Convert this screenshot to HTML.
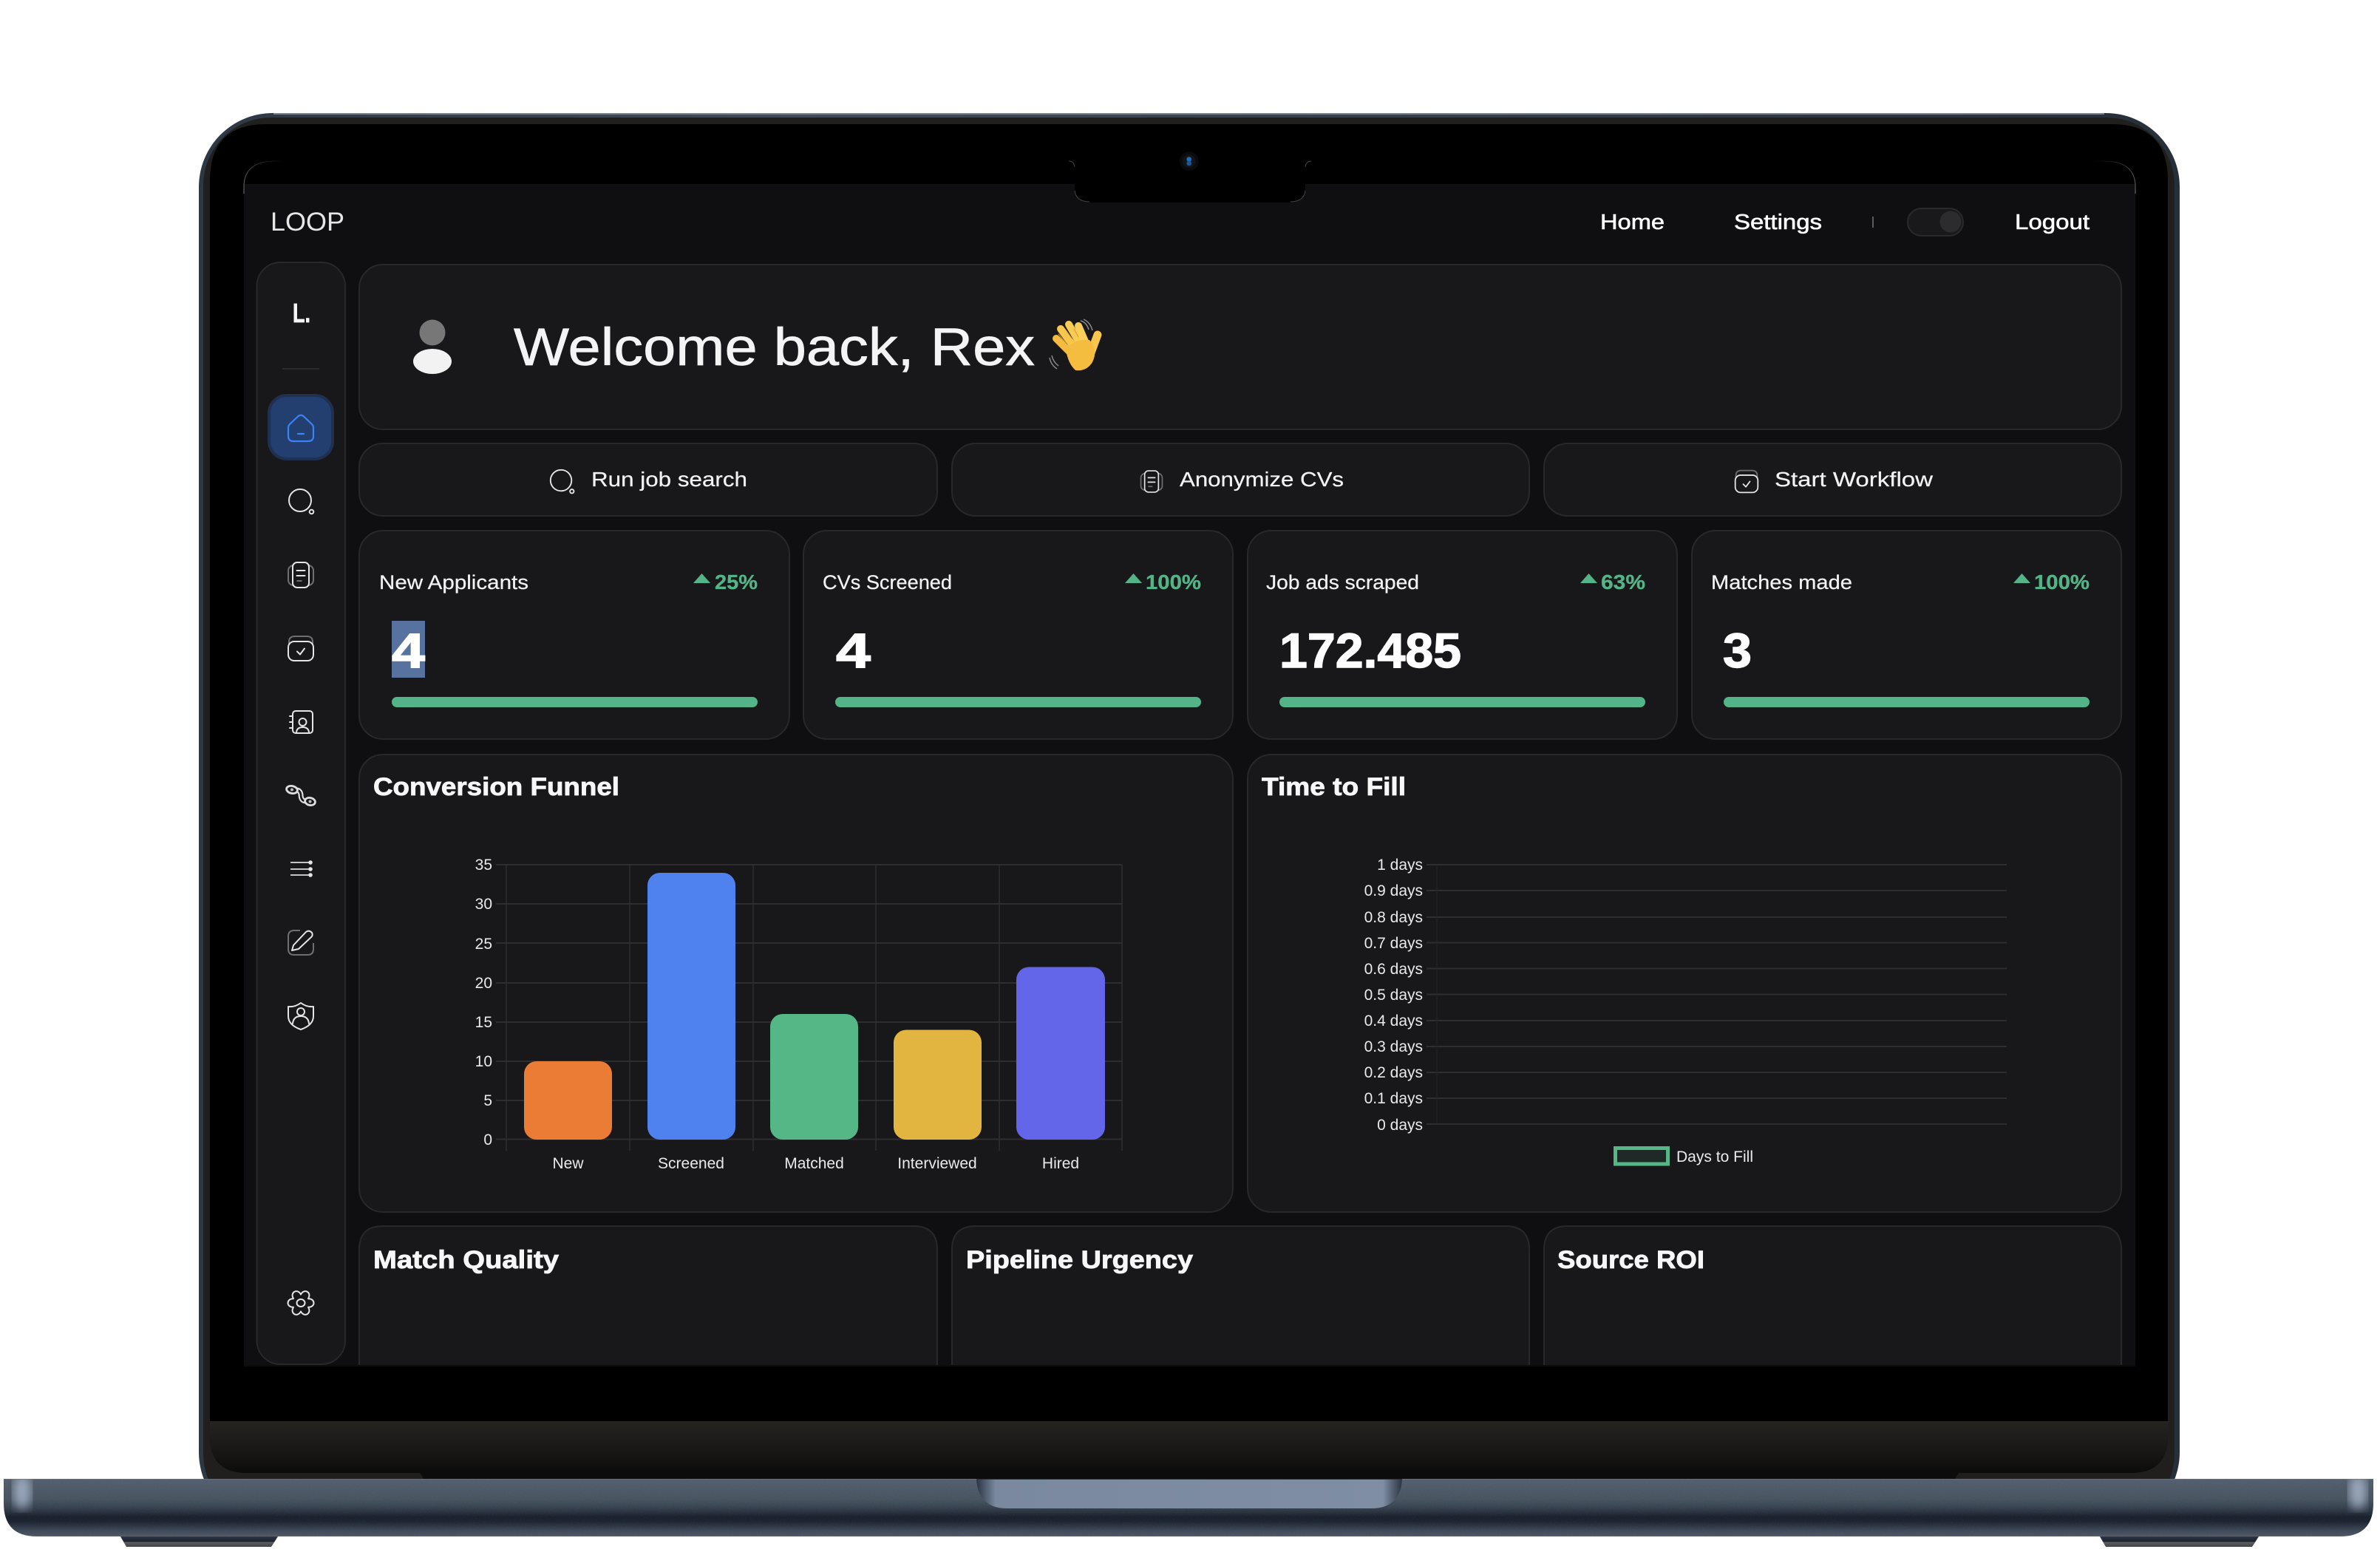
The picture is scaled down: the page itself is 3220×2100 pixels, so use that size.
<!DOCTYPE html>
<html><head><meta charset="utf-8"><title>LOOP Dashboard</title>
<style>
html,body{margin:0;padding:0;background:#fff}
svg{display:block}
text{font-family:"Liberation Sans",sans-serif}
.t{fill:#f2f2f2;font-size:28px;stroke:#f2f2f2;stroke-width:.25}
.m{stroke:#fff;stroke-width:.6;fill:#fff;font-size:29px}
.b{fill:#f7f7f7;font-size:34px;font-weight:700;stroke:#f7f7f7;stroke-width:.8}
.p{fill:#53b587;font-size:28px;font-weight:700;stroke:#53b587;stroke-width:.3}
.n{fill:#fff;font-size:66px;font-weight:700;stroke:#fff;stroke-width:1.4}
.c{fill:#eaeaea;font-size:21px}
.card{fill:#18181a;stroke:#28282a;stroke-width:2}
.ic{fill:none;stroke:#e4e4e4;stroke-width:2;stroke-linecap:round;stroke-linejoin:round}
.dim{fill:none;stroke:#6f6f72;stroke-width:2}
.g{stroke:#2e2e30;stroke-width:2}
</style></head>
<body>
<svg xmlns="http://www.w3.org/2000/svg" width="3220" height="2100" viewBox="0 0 3220 2100">
<defs>
<linearGradient id="chin" x1="0" y1="0" x2="0" y2="1"><stop offset="0" stop-color="#262421"/><stop offset=".5" stop-color="#1a1917"/><stop offset="1" stop-color="#0c0c0c"/></linearGradient>
<linearGradient id="base" x1="0" y1="0" x2="0" y2="1">
<stop offset="0" stop-color="#535f6f"/><stop offset=".36" stop-color="#47535f"/><stop offset=".5" stop-color="#36414f"/><stop offset=".66" stop-color="#19202c"/><stop offset=".74" stop-color="#1b2330"/><stop offset=".9" stop-color="#3d4858"/><stop offset=".98" stop-color="#4a5362"/><stop offset="1" stop-color="#62666f"/>
</linearGradient>
<linearGradient id="notch" x1="0" y1="0" x2="1" y2="0">
<stop offset="0" stop-color="#2b3444"/><stop offset=".045" stop-color="#7a899e"/><stop offset=".955" stop-color="#7f8ea3"/><stop offset="1" stop-color="#2b3444"/>
</linearGradient>
<linearGradient id="foot" x1="0" y1="0" x2="0" y2="1"><stop offset="0" stop-color="#2c3646"/><stop offset=".5" stop-color="#1b2230"/><stop offset=".55" stop-color="#5e5e5e"/><stop offset="1" stop-color="#444"/></linearGradient>
<linearGradient id="edge" x1="0" y1="0" x2="1" y2="0"><stop offset="0" stop-color="#2e3744"/><stop offset=".3" stop-color="#414b59"/><stop offset="1" stop-color="#272f3b"/></linearGradient>
<linearGradient id="fadeL" x1="0" y1="1" x2="1" y2="0"><stop offset="0" stop-color="#777"/><stop offset="1" stop-color="#777" stop-opacity="0"/></linearGradient>
<linearGradient id="fadeR" x1="1" y1="1" x2="0" y2="0"><stop offset="0" stop-color="#777"/><stop offset="1" stop-color="#777" stop-opacity="0"/></linearGradient>
<filter id="noise" x="0" y="0" width="100%" height="100%"><feTurbulence type="fractalNoise" baseFrequency=".7" numOctaves="2" seed="4"/><feColorMatrix values="0 0 0 0 1  0 0 0 0 1  0 0 0 0 1  0 0 0 .35 -.1"/></filter>
<filter id="bl"><feGaussianBlur stdDeviation="7"/></filter>
<clipPath id="baseclip"><path d="M5,2001H3211V2034Q3211,2079 3166,2079H50Q5,2079 5,2034Z"/></clipPath>

<g id="i-search" class="ic"><circle cx="-1" cy="-1" r="15"/><circle cx="14.500" cy="14.500" r="2.800"/></g>
<g id="i-doc"><rect class="dim" x="-17" y="-13" width="34" height="27" rx="7"/><rect class="ic" style="fill:#18181a" x="-11" y="-17" width="22" height="34" rx="6"/><path class="ic" d="M-5.500,-6H5.500M-5.500,1H5.500"/><path class="dim" d="M-5.500,8H1.500"/></g>
<g id="i-check"><path class="dim" d="M-16,-5V-9Q-16,-16.500 -8,-16.500H8Q16,-16.500 16,-9V-5"/><rect class="ic" style="fill:#18181a" x="-17" y="-9.500" width="34" height="26" rx="8"/><path class="ic" d="M-5,4L-1,8L5,0"/></g>
</defs>

<rect width="3220" height="2100" fill="#fff"/>

<!-- lid -->
<rect x="269" y="153" width="2680" height="1912" rx="100" fill="url(#edge)"/>
<path d="M370,154H2847" stroke="#79838f" stroke-width="2" fill="none"/>
<rect x="275" y="159" width="2667" height="1900" rx="92" fill="#211f1d"/>
<path d="M360,168H2857Q2933,168 2933,244V1943Q2933,1993 2883,1993H334Q284,1993 284,1943V244Q284,168 360,168Z" fill="#000"/>
<path d="M284,1923H2933V1943Q2933,1993 2883,1993H334Q284,1993 284,1943Z" fill="url(#chin)"/>
<path d="M568,1993L573,2001H2645L2650,1993Z" fill="#0c0c0c"/>

<!-- screen -->
<rect x="330" y="249" width="2559" height="1600" fill="#0f0f11"/>
<path d="M330,262V250Q332,218 372,218H386" fill="none" stroke="url(#fadeL)" stroke-width="1"/>
<path d="M2889,262V250Q2887,218 2847,218H2833" fill="none" stroke="url(#fadeR)" stroke-width="1"/>
<path d="M1454,218H1766V254Q1766,274 1746,274H1474Q1454,274 1454,254Z" fill="#000"/>
<path d="M1454,258Q1456,273 1474,273M1766,258Q1764,273 1746,273M1446,218Q1453,218 1454,226M1774,218Q1767,218 1766,226" fill="none" stroke="#444" stroke-width="1"/>
<circle cx="1608.700" cy="218" r="13" fill="#0a0a0c"/><circle cx="1608.700" cy="218" r="9" fill="#111418"/>
<circle cx="1608.700" cy="215.500" r="3.300" fill="#1d6fb8"/><circle cx="1608.700" cy="221" r="3.300" fill="#17599a"/>

<!-- top nav -->
<text x="366" y="312" style="font-size:35px;fill:#e6e6e6" textLength="100" lengthAdjust="spacingAndGlyphs">LOOP</text>
<text x="2165" y="310" class="m" textLength="87" lengthAdjust="spacingAndGlyphs">Home</text>
<text x="2346" y="310" class="m" textLength="119" lengthAdjust="spacingAndGlyphs">Settings</text>
<path d="M2534,293V308" stroke="#5c5c5e" stroke-width="2"/>
<rect x="2581" y="282" width="75" height="37" rx="18.500" fill="#19191b" stroke="#2a2a2c" stroke-width="2"/>
<circle cx="2639" cy="300" r="14.500" fill="#2c2c2e"/>
<text x="2726" y="310" class="m" textLength="101" lengthAdjust="spacingAndGlyphs">Logout</text>

<!-- sidebar -->
<rect class="card" x="347.500" y="355" width="119.500" height="1491" rx="32"/>
<text x="396" y="436" style="font-size:36px;font-weight:700;stroke:#f5f5f5;stroke-width:.8" fill="#f5f5f5" textLength="24" lengthAdjust="spacingAndGlyphs">L.</text>
<path d="M382,499H432" stroke="#2b2b2d" stroke-width="2"/>
<rect x="364" y="535" width="86" height="86" rx="24" fill="#233f70" stroke="#1f3050" stroke-width="4"/>
<g transform="translate(407,579)" fill="none" stroke="#3b82f6" stroke-width="2.200" stroke-linejoin="round" stroke-linecap="round"><path d="M-15,-5L-4,-15.500Q0,-19 4,-15.500L15,-5Q17,-3 17,0V11Q17,18 10,18H-10Q-17,18 -17,11V0Q-17,-3 -15,-5Z"/><path d="M-4,8H4"/></g>
<use href="#i-search" transform="translate(407,678)"/>
<use href="#i-doc" transform="translate(407,778)"/>
<use href="#i-check" transform="translate(407,877.500)"/>
<g class="ic" transform="translate(408,977)"><rect x="-12" y="-15" width="27" height="30" rx="4"/><path d="M-16,-8H-12M-16,0H-12M-16,8H-12"/><circle cx="1.500" cy="0" r="5"/><path d="M-7,15Q-7,7 1.500,7Q10,7 10,15"/></g>
<g transform="translate(407,1077)" fill="none" stroke-linecap="round">
<path d="M-6,-8Q-1,-8 0,-2Q0,7 7,7" stroke="#ddd" stroke-width="7"/>
<path d="M-6,-8Q-1,-8 0,-2Q0,7 7,7" stroke="#18181a" stroke-width="2.600"/>
<ellipse cx="-12" cy="-8.500" rx="7.500" ry="5" stroke="#ddd" stroke-width="2.800" fill="#18181a" transform="rotate(12 -12 -8.500)"/>
<ellipse cx="12.500" cy="7.500" rx="7" ry="5" stroke="#ddd" stroke-width="2.800" fill="#18181a" transform="rotate(12 12.500 7.500)"/>
<circle cx="-12" cy="-8.500" r="2" fill="#bbb"/><circle cx="12.500" cy="7.500" r="2" fill="#bbb"/></g>
<g transform="translate(407,1176)"><path d="M-14,-9H12M-14,0H12M-14,8H12" stroke="#ddd" stroke-width="1.800"/><circle cx="13" cy="-9" r="2.800" fill="#e4e4e4"/><circle cx="13" cy="0" r="2.800" fill="#e4e4e4"/><circle cx="13" cy="8" r="2.800" fill="#e4e4e4"/></g>
<g transform="translate(407,1275)"><path class="dim" d="M-1,-16H-9Q-17,-16 -17,-8V9Q-17,17 -9,17H9Q17,17 17,9V1"/><path class="ic" d="M-12,11L-10,4L7,-14Q11,-17 15,-13Q17,-9 13,-6L-3,9Z"/></g>
<g class="ic" transform="translate(407,1375)"><path d="M0,-18Q-8,-12 -17,-13V0Q-17,12 0,18Q17,12 17,0V-13Q8,-12 0,-18Z"/><circle cx="0" cy="-6" r="5"/><path d="M-11,10Q-10,0 0,0Q10,0 11,10"/></g>
<g class="ic" transform="translate(407,1763)"><path d="M10,-5.750C20,-6 20,6 10,5.750C15.200,14.300 4.800,20.300 0,11.500C-4.800,20.300 -15.200,14.300 -10,5.750C-20,6 -20,-6 -10,-5.750C-15.200,-14.300 -4.800,-20.300 0,-11.500C4.800,-20.300 15.200,-14.300 10,-5.750Z"/><ellipse cx="0" cy="0" rx="5.500" ry="5"/></g>

<!-- welcome -->
<rect class="card" x="486" y="358" width="2384" height="223" rx="32"/>
<circle cx="585" cy="450" r="17.500" fill="#777778"/>
<ellipse cx="585" cy="489" rx="26" ry="17" fill="#f2f2f2"/>
<text x="695" y="494" style="font-size:71px;stroke:#f4f4f4;stroke-width:.7" fill="#f4f4f4" textLength="705" lengthAdjust="spacingAndGlyphs">Welcome back, Rex</text>
<g stroke-linecap="round" fill="none">
<path d="M1447,476L1429,458" stroke="#f4bb40" stroke-width="10"/><path d="M1452,468L1435,445" stroke="#f7c64d" stroke-width="10"/><path d="M1460,463L1446,439" stroke="#f8cb55" stroke-width="10"/><path d="M1468,462L1459,441" stroke="#f9cf5c" stroke-width="10"/><path d="M1475,480L1485,453" stroke="#f7c64d" stroke-width="11"/>
<path d="M1442,464L1432,452M1450,458L1441,445M1459,456L1453,445" stroke="#d99b2b" stroke-width="1"/>
</g>
<path d="M1442,473Q1452,458 1474,460Q1486,474 1478,490Q1470,503 1455,501Q1445,492 1442,473Z" fill="#f5bd3f"/>
<path d="M1462,434Q1470,436 1473,446M1466,432Q1475,436 1478,447M1423,481Q1425,490 1432,495M1420,484Q1422,494 1430,499" fill="none" stroke="#8a8a8a" stroke-width="1.500"/>

<!-- action cards -->
<rect class="card" x="486" y="600" width="782" height="98" rx="32"/>
<rect class="card" x="1288" y="600" width="781" height="98" rx="32"/>
<rect class="card" x="2089" y="600" width="781" height="98" rx="32"/>
<use href="#i-search" transform="translate(760,651) scale(.95)"/>
<text x="800" y="658" class="t" textLength="211" lengthAdjust="spacingAndGlyphs">Run job search</text>
<use href="#i-doc" transform="translate(1558,651.500) scale(.85)"/>
<text x="1596" y="658" class="t" textLength="222" lengthAdjust="spacingAndGlyphs">Anonymize CVs</text>
<use href="#i-check" transform="translate(2363,651.500) scale(.9)"/>
<text x="2401" y="658" class="t" textLength="214" lengthAdjust="spacingAndGlyphs">Start Workflow</text>

<!-- stats -->
<rect class="card" x="486" y="718" width="582" height="282" rx="32"/>
<rect class="card" x="1087" y="718" width="581" height="282" rx="32"/>
<rect class="card" x="1688" y="718" width="581" height="282" rx="32"/>
<rect class="card" x="2289" y="718" width="581" height="282" rx="32"/>

<text x="513" y="797" class="t" style="font-size:27px" textLength="202" lengthAdjust="spacingAndGlyphs">New Applicants</text>
<path d="M938,789L949.500,776L961,789Z" fill="#53b587"/>
<text x="967" y="797" class="p" textLength="58" lengthAdjust="spacingAndGlyphs">25%</text>
<rect x="530" y="840" width="45" height="77" fill="#57729f"/>
<text x="530" y="903" class="n" textLength="45" lengthAdjust="spacingAndGlyphs">4</text>
<rect x="530" y="943" width="495" height="14" rx="7" fill="#53b587"/>

<text x="1113" y="797" class="t" style="font-size:27px" textLength="175" lengthAdjust="spacingAndGlyphs">CVs Screened</text>
<path d="M1522,789L1533.500,776L1545,789Z" fill="#53b587"/>
<text x="1550" y="797" class="p" textLength="75" lengthAdjust="spacingAndGlyphs">100%</text>
<text x="1131" y="903" class="n" textLength="47" lengthAdjust="spacingAndGlyphs">4</text>
<rect x="1130" y="943" width="495" height="14" rx="7" fill="#53b587"/>

<text x="1713" y="797" class="t" style="font-size:27px" textLength="207" lengthAdjust="spacingAndGlyphs">Job ads scraped</text>
<path d="M2138,789L2149.500,776L2161,789Z" fill="#53b587"/>
<text x="2166" y="797" class="p" textLength="60" lengthAdjust="spacingAndGlyphs">63%</text>
<text x="1731" y="903" class="n" textLength="246" lengthAdjust="spacingAndGlyphs">172.485</text>
<rect x="1731" y="943" width="495" height="14" rx="7" fill="#53b587"/>

<text x="2315" y="797" class="t" style="font-size:27px" textLength="191" lengthAdjust="spacingAndGlyphs">Matches made</text>
<path d="M2724,789L2735.500,776L2747,789Z" fill="#53b587"/>
<text x="2752" y="797" class="p" textLength="75" lengthAdjust="spacingAndGlyphs">100%</text>
<text x="2331" y="903" class="n" textLength="39" lengthAdjust="spacingAndGlyphs">3</text>
<rect x="2332" y="943" width="495" height="14" rx="7" fill="#53b587"/>

<!-- conversion funnel -->
<rect class="card" x="486" y="1021" width="1182" height="619" rx="32"/>
<text x="505" y="1076" class="b" textLength="333" lengthAdjust="spacingAndGlyphs">Conversion Funnel</text>
<g class="g">
<path d="M671,1170H1518M671,1223H1518M671,1276H1518M671,1330H1518M671,1383H1518M671,1436H1518M671,1489H1518M671,1541.500H1518" fill="none"/>
<path d="M685,1170V1557M852,1170V1557M1019,1170V1557M1185,1170V1557M1352,1170V1557M1518,1170V1557" fill="none" stroke-width="1.500"/>
</g>
<rect x="709" y="1436" width="119" height="106" rx="17" fill="#eb7c36"/>
<rect x="876" y="1181" width="119" height="361" rx="17" fill="#4f82ee"/>
<rect x="1042" y="1372" width="119" height="170" rx="17" fill="#55b686"/>
<rect x="1209" y="1393.500" width="119" height="148.500" rx="17" fill="#e2b540"/>
<rect x="1375" y="1308.500" width="120" height="233.500" rx="17" fill="#6366e8"/>
<g class="c" text-anchor="end">
<text x="666" y="1177">35</text><text x="666" y="1230">30</text><text x="666" y="1284">25</text><text x="666" y="1337">20</text><text x="666" y="1390">15</text><text x="666" y="1443">10</text><text x="666" y="1496">5</text><text x="666" y="1549">0</text>
</g>
<g class="c" text-anchor="middle">
<text x="768.500" y="1581">New</text><text x="935" y="1581">Screened</text><text x="1101.500" y="1581">Matched</text><text x="1268" y="1581">Interviewed</text><text x="1435" y="1581">Hired</text>
</g>

<!-- time to fill -->
<rect class="card" x="1688" y="1021" width="1182" height="619" rx="32"/>
<text x="1707" y="1076" class="b" textLength="195" lengthAdjust="spacingAndGlyphs">Time to Fill</text>
<path class="g" fill="none" d="M1930,1170H2715M1930,1205H2715M1930,1241H2715M1930,1275.500H2715M1930,1310.500H2715M1930,1345.500H2715M1930,1381H2715M1930,1416H2715M1930,1451H2715M1930,1486H2715M1930,1521H2715"/>
<path d="M1944,1170V1521" stroke="#222224" stroke-width="1"/>
<g class="c" text-anchor="end">
<text x="1925" y="1177">1 days</text><text x="1925" y="1212">0.9 days</text><text x="1925" y="1248">0.8 days</text><text x="1925" y="1283">0.7 days</text><text x="1925" y="1318">0.6 days</text><text x="1925" y="1353">0.5 days</text><text x="1925" y="1388">0.4 days</text><text x="1925" y="1423">0.3 days</text><text x="1925" y="1458">0.2 days</text><text x="1925" y="1493">0.1 days</text><text x="1925" y="1529">0 days</text>
</g>
<rect x="2185.500" y="1553.500" width="71" height="21.500" fill="#1e2a26" stroke="#55b686" stroke-width="5"/>
<text x="2268" y="1572" class="c" textLength="104" lengthAdjust="spacingAndGlyphs">Days to Fill</text>

<!-- bottom cards -->
<path class="card" d="M486,1847V1691Q486,1659 518,1659H1236Q1268,1659 1268,1691V1847"/>
<path class="card" d="M1288,1847V1691Q1288,1659 1320,1659H2037Q2069,1659 2069,1691V1847"/>
<path class="card" d="M2089,1847V1691Q2089,1659 2121,1659H2838Q2870,1659 2870,1691V1847"/>
<text x="505" y="1716" class="b" textLength="251" lengthAdjust="spacingAndGlyphs">Match Quality</text>
<text x="1307" y="1716" class="b" textLength="307" lengthAdjust="spacingAndGlyphs">Pipeline Urgency</text>
<text x="2107" y="1716" class="b" textLength="199" lengthAdjust="spacingAndGlyphs">Source ROI</text>
<rect x="330" y="1847" width="2559" height="2" fill="#0b0b0c"/>

<!-- base -->
<path d="M163,2079L171,2093H367L376,2079Z" fill="url(#foot)"/>
<path d="M2841,2079L2849,2093H3047L3056,2079Z" fill="url(#foot)"/>
<path d="M5,2001H3211V2034Q3211,2079 3166,2079H50Q5,2079 5,2034Z" fill="url(#base)"/>
<g clip-path="url(#baseclip)">
<ellipse cx="30" cy="2018" rx="12" ry="24" fill="#9aa8bc" filter="url(#bl)"/>
<ellipse cx="3190" cy="2018" rx="12" ry="24" fill="#9aa8bc" filter="url(#bl)"/>
<rect x="5" y="2001" width="3206" height="78" filter="url(#noise)" opacity=".18"/>
</g>
<path d="M1321,2001H1897Q1895,2041 1855,2041H1363Q1323,2041 1321,2001Z" fill="url(#notch)"/>
<path d="M5,2001.500H3211" stroke="#6c7684" stroke-width="1" opacity=".7"/>
<path d="M1321,2001.500H1897" stroke="#2c3340" stroke-width="1"/>
</svg>
</body></html>
